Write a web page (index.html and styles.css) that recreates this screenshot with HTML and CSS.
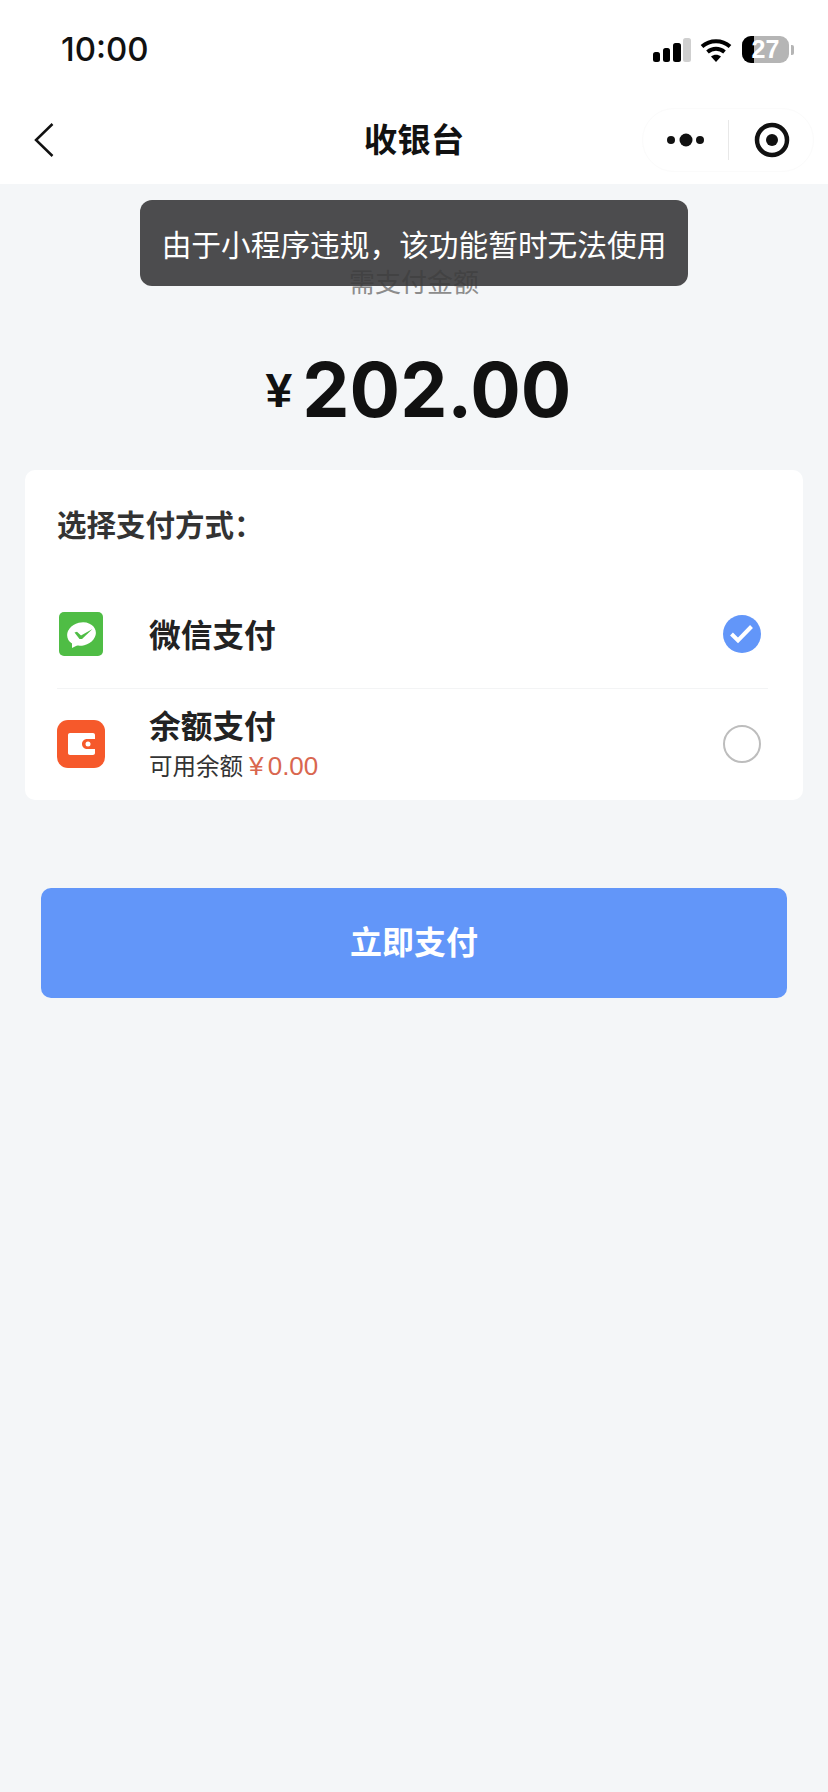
FILE: index.html
```html
<!DOCTYPE html>
<html lang="zh-CN">
<head>
    <meta charset="UTF-8">
    <meta name="viewport" content="width=device-width, initial-scale=1.0">
    <title>收银台</title>
    <link rel="stylesheet" href="styles.css">
</head>
<body>
    <div class="page">
        <header class="top">
            <div class="status-bar">
                <span class="time">10:00</span>
                <div class="status-icons">
                    <svg class="signal" width="38" height="24" viewBox="0 0 38 24">
                        <rect x="0" y="14" width="7" height="10" rx="2.5" fill="#000"/>
                        <rect x="10" y="10" width="7" height="14" rx="2.5" fill="#000"/>
                        <rect x="20" y="5" width="8" height="19" rx="2.5" fill="#000"/>
                        <rect x="30" y="0" width="8" height="24" rx="2.5" fill="#cfcfcf"/>
                    </svg>
                    <svg class="wifi" width="32" height="24" viewBox="0 0 32 24">
                        <path d="M2 8.500C10 1.500 22 1.500 30 8.500" fill="none" stroke="#000" stroke-width="4"/>
                        <path d="M7.500 14C12.500 9.800 19.500 9.800 24.500 14" fill="none" stroke="#000" stroke-width="4"/>
                        <path d="M11 18.500C14 16.200 18 16.200 21 18.500L16 24Z" fill="#000"/>
                    </svg>
                    <div class="battery">
                        <div class="battery-level"></div>
                        <span class="battery-num">27</span>
                    </div>
                    <div class="battery-nub"></div>
                </div>
            </div>
            <nav class="nav">
                <svg class="back" width="20" height="34" viewBox="0 0 20 34">
                    <path d="M18.500 1L2 17L18.500 33" fill="none" stroke="#111" stroke-width="2.500"/>
                </svg>
                <h1 class="nav-title">收银台</h1>
                <div class="capsule">
                    <svg width="44" height="14" viewBox="0 0 44 14">
                        <circle cx="4" cy="7" r="4" fill="#111"/>
                        <circle cx="19" cy="7" r="6.500" fill="#111"/>
                        <circle cx="33" cy="7" r="4" fill="#111"/>
                    </svg>
                    <div class="capsule-line"></div>
                    <svg class="capsule-target" width="36" height="36" viewBox="0 0 36 36">
                        <circle cx="18" cy="18" r="15" fill="none" stroke="#111" stroke-width="4.500"/>
                        <circle cx="18" cy="18" r="6" fill="#111"/>
                    </svg>
                </div>
            </nav>
        </header>

        <main class="content">
            <div class="toast">由于小程序违规，该功能暂时无法使用</div>

            <div class="amount-label">需支付金额</div>
            <div class="amount">
                <span class="amount-yen">¥</span>
                <span class="amount-num">202.00</span>
            </div>

            <section class="card">
                <h2 class="card-title">选择支付方式：</h2>
                <div class="pay-row">
                    <div class="pay-icon">
                        <svg width="44" height="44" viewBox="0 0 44 44">
                            <rect width="44" height="44" rx="5" fill="#4fbd45"/>
                            <ellipse cx="22.500" cy="22" rx="14.500" ry="11.500" transform="rotate(-14 22.500 22)" fill="#fff"/>
                            <path d="M13 28L13 36L21 32Z" fill="#fff"/>
                            <path d="M15.500 20.500L18 19.800L22 23.500L33.500 17L23 27L20.500 27Z" fill="#4fbd45"/>
                        </svg>
                    </div>
                    <div class="pay-text">
                        <div class="pay-name">微信支付</div>
                    </div>
                    <div class="radio radio-on">
                        <svg width="38" height="38" viewBox="0 0 38 38">
                            <path d="M8.500 19L15 25.500L28.500 11.500" fill="none" stroke="#fff" stroke-width="4"/>
                        </svg>
                    </div>
                </div>
                <div class="pay-row pay-row-last">
                    <div class="pay-icon">
                        <svg width="48" height="48" viewBox="0 0 48 48">
                            <rect width="48" height="48" rx="11" fill="#f6592b"/>
                            <path d="M13 13H36C37.100 13 38 13.900 38 15V19H30C27.200 19 25 21.200 25 24C25 26.800 27.200 29 30 29H38V33C38 34.100 37.100 35 36 35H13C11.900 35 11 34.100 11 33V15C11 13.900 11.900 13 13 13Z" fill="#fff"/>
                            <circle cx="31" cy="24" r="2.500" fill="#fff"/>
                        </svg>
                    </div>
                    <div class="pay-text">
                        <div class="pay-name">余额支付</div>
                        <div class="pay-sub">可用余额<span class="pay-balance">¥ 0.00</span></div>
                    </div>
                    <div class="radio"></div>
                </div>
            </section>

            <button class="pay-btn">立即支付</button>
        </main>
    </div>
</body>
</html>
```

FILE: styles.css
```css
* {
    box-sizing: border-box;
}
body {
    margin: 0;
    background-color: #f4f6f8;
    font-family: "Noto Sans CJK SC", "Liberation Sans", sans-serif;
    color: #222;
}
.page {
    min-height: 1792px;
    display: flex;
    flex-direction: column;
}
.top {
    background-color: #fff;
    height: 184px;
}
.status-bar {
    height: 96px;
    padding: 30px 34px 0 61px;
    display: flex;
    justify-content: space-between;
    align-items: flex-start;
}
.time {
    font-family: Inter, sans-serif;
    font-size: 33px;
    font-weight: 500;
    line-height: 38px;
    color: #111;
}
.status-icons {
    display: flex;
    align-items: center;
    margin-top: 6px;
}
.wifi {
    margin-left: 9px;
}
.battery {
    position: relative;
    width: 47px;
    height: 27px;
    margin-left: 10px;
    background-color: #b5b5b5;
    border-radius: 9px;
    overflow: hidden;
    display: flex;
    align-items: center;
    justify-content: center;
}
.battery-level {
    position: absolute;
    left: 0;
    top: 0;
    bottom: 0;
    width: 12px;
    background-color: #000;
}
.battery-num {
    position: relative;
    font-family: "Liberation Sans", sans-serif;
    font-size: 25px;
    font-weight: 700;
    color: #fff;
}
.battery-nub {
    width: 3px;
    height: 10px;
    margin-left: 2px;
    background-color: #b5b5b5;
    border-radius: 0 2px 2px 0;
}
.nav {
    position: relative;
    height: 88px;
    padding: 0 14px 0 34px;
    display: flex;
    align-items: center;
    justify-content: space-between;
}
.nav-title {
    position: absolute;
    left: 0;
    right: 0;
    top: 18px;
    margin: 0;
    text-align: center;
    font-size: 33.500px;
    font-weight: 700;
    line-height: 48px;
    color: #111;
}
.capsule {
    position: relative;
    width: 172px;
    height: 64px;
    border: 1px solid #fbfbfb;
    border-radius: 32px;
    display: flex;
    align-items: center;
    padding-left: 24px;
}
.capsule-line {
    width: 1px;
    height: 40px;
    background-color: #e8e8e8;
    margin-left: 17px;
}
.capsule-target {
    margin-left: 25px;
}
.content {
    position: relative;
    flex: 1;
    padding-top: 77px;
}
.toast {
    position: absolute;
    top: 16px;
    left: 140px;
    width: 548px;
    height: 86px;
    border-radius: 12px;
    background-color: rgba(58, 58, 59, 0.9);
    color: #fff;
    font-size: 29.700px;
    display: flex;
    align-items: center;
    justify-content: center;
    white-space: nowrap;
}
.amount-label {
    text-align: center;
    font-size: 26px;
    line-height: 40px;
    color: #8c8c8c;
}
.amount {
    margin-top: 39px;
    height: 100px;
    padding-left: 9px;
    display: flex;
    align-items: center;
    justify-content: center;
    gap: 10px;
    font-weight: 700;
    color: #111;
}
.amount-yen {
    font-family: "Liberation Sans", sans-serif;
    font-size: 48px;
}
.amount-num {
    font-family: Inter, sans-serif;
    font-size: 75px;
    line-height: 100px;
}
.card {
    margin: 30px 25px 0;
    padding: 33px 35px 0 32px;
    height: 330px;
    background-color: #fff;
    border-radius: 10px;
}
.card-title {
    margin: 0 0 36px;
    font-size: 29.500px;
    font-weight: 700;
    line-height: 40px;
    color: #333;
}
.pay-row {
    height: 110px;
    display: flex;
    align-items: center;
    padding-right: 7px;
    border-bottom: 1px solid #f3f4f5;
}
.pay-row-last {
    border-bottom: none;
}
.pay-icon {
    width: 48px;
    margin-right: 44px;
    display: flex;
    justify-content: center;
}
.pay-text {
    flex: 1;
    padding-bottom: 2px;
}
.pay-name {
    font-size: 31.700px;
    font-weight: 700;
    line-height: 44px;
    color: #222;
}
.pay-sub {
    margin-top: 1px;
    font-size: 23.500px;
    line-height: 36px;
    color: #333;
}
.pay-balance {
    margin-left: 6px;
    font-family: "Liberation Sans", sans-serif;
    font-size: 26px;
    word-spacing: -3px;
    color: #d9674f;
}
.radio {
    width: 38px;
    height: 38px;
    border: 2px solid #bdbdbd;
    border-radius: 50%;
}
.radio-on {
    border: none;
    background-color: #6296f9;
}
.radio-on svg {
    display: block;
}
.pay-btn {
    display: block;
    width: 746px;
    height: 110px;
    margin: 88px 0 0 41px;
    padding: 0 0 6px;
    border: none;
    border-radius: 10px;
    background-color: #6296f9;
    color: #fff;
    font-family: inherit;
    font-size: 32px;
    font-weight: 700;
}
```
